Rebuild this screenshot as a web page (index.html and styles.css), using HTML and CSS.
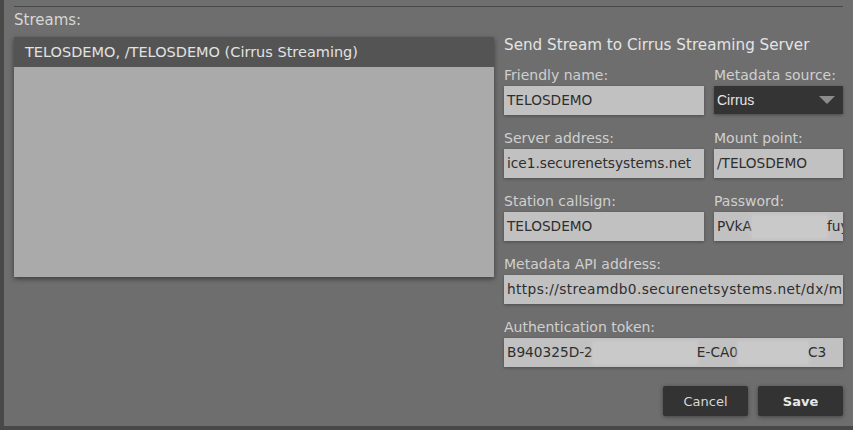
FILE: index.html
```html
<!DOCTYPE html>
<html>
<head>
<meta charset="utf-8">
<link rel="stylesheet" href="styles.css">
</head>
<body>
<div class="panel">
  <div class="rule"></div>
  <div class="section-label">Streams:</div>
  <div class="content">
    <div class="list">
      <div class="list-item selected">TELOSDEMO, /TELOSDEMO (Cirrus Streaming)</div>
    </div>
    <div class="form">
      <div class="title">Send Stream to Cirrus Streaming Server</div>
      <div class="grid">
        <div class="field-group">
          <div class="label">Friendly name:</div>
          <div class="input">TELOSDEMO</div>
        </div>
        <div class="field-group">
          <div class="label">Metadata source:</div>
          <div class="select"><span>Cirrus</span><span class="arrow"></span></div>
        </div>
        <div class="field-group">
          <div class="label">Server address:</div>
          <div class="input">ice1.securenetsystems.net</div>
        </div>
        <div class="field-group">
          <div class="label">Mount point:</div>
          <div class="input">/TELOSDEMO</div>
        </div>
        <div class="field-group">
          <div class="label">Station callsign:</div>
          <div class="input">TELOSDEMO</div>
        </div>
        <div class="field-group">
          <div class="label">Password:</div>
          <div class="input">PVkA<span class="redact pw"></span>fuy</div>
        </div>
        <div class="field-group wide">
          <div class="label">Metadata API address:</div>
          <div class="input url">https://streamdb0.securenetsystems.net/dx/metadata</div>
        </div>
        <div class="field-group wide">
          <div class="label">Authentication token:</div>
          <div class="input">B940325D-2<span class="redact t1"></span>E-CA0<span class="redact t2"></span>C3</div>
        </div>
      </div>
      <div class="buttons">
        <button class="btn">Cancel</button>
        <button class="btn primary">Save</button>
      </div>
    </div>
  </div>
</div>
</body>
</html>
```
FILE: styles.css
```css
html, body {
  margin: 0;
  padding: 0;
  background: #484848;
  width: 853px;
  height: 430px;
  overflow: hidden;
  font-family: "DejaVu Sans", "Open Sans", sans-serif;
}
.panel {
  margin-left: 4px;
  height: 426px;
  background: #6e6e6e;
  padding: 6px 10px 0 10px;
  box-sizing: border-box;
}
.rule {
  height: 1px;
  background: #484848;
}
.section-label {
  margin-top: 3px;
  height: 20px;
  line-height: 20px;
  font-size: 15px;
  color: #d6d6d6;
}
.content {
  margin-top: 7px;
  display: flex;
  gap: 10px;
}
.list {
  width: 480px;
  height: 240px;
  background: #aaaaaa;
  box-shadow: 0 2px 5px rgba(0,0,0,0.45);
  flex: none;
}
.list-item {
  height: 30px;
  line-height: 30px;
  padding-left: 11px;
  font-size: 14.5px;
  color: #e2e2e2;
}
.list-item.selected {
  background: #545454;
}
.form {
  width: 339px;
  display: flex;
  flex-direction: column;
}
.title {
  margin-top: -2px;
  height: 20px;
  line-height: 20px;
  font-size: 15.2px;
  color: #e4e4e4;
  white-space: nowrap;
}
.grid {
  margin-top: 11px;
  display: grid;
  grid-template-columns: 200px 129px;
  column-gap: 10px;
  row-gap: 14px;
}
.wide {
  grid-column: 1 / span 2;
}
.label {
  height: 18px;
  line-height: 18px;
  font-size: 14px;
  color: #d0d0d0;
  margin-bottom: 2px;
  white-space: nowrap;
}
.input {
  height: 29px;
  line-height: 29px;
  background: #c1c1c1;
  color: #2e2e2e;
  font-size: 13.7px;
  padding-left: 3px;
  white-space: nowrap;
  overflow: hidden;
  box-shadow: 0 1px 3px rgba(0,0,0,0.3);
}
.input.url {
  letter-spacing: 0.4px;
}
.redact {
  display: inline-block;
  height: 22px;
  vertical-align: middle;
  background: #c9c9c9;
  box-shadow: 0 0 4px 1px #c9c9c9;
}
.redact.pw { width: 75px; }
.redact.t1 { width: 104px; }
.redact.t2 { width: 70px; }
.select {
  height: 28px;
  background: #343434;
  color: #e6e6e6;
  font-family: "Liberation Sans", Arial, sans-serif;
  font-size: 14px;
  display: flex;
  align-items: center;
  justify-content: space-between;
  padding: 0 8px 0 3px;
  box-shadow: 0 1px 3px rgba(0,0,0,0.35);
}
.arrow {
  width: 0;
  height: 0;
  border-left: 8px solid transparent;
  border-right: 8px solid transparent;
  border-top: 8px solid #8c8c8c;
}
.buttons {
  margin-top: 19px;
  display: flex;
  justify-content: flex-end;
  gap: 10px;
}
.btn {
  width: 85px;
  height: 30px;
  border: none;
  border-radius: 2px;
  background: #333333;
  color: #d8d8d8;
  font-family: "DejaVu Sans", "Open Sans", sans-serif;
  font-size: 13px;
  box-shadow: 0 1px 4px rgba(0,0,0,0.4);
  padding: 0;
}
.btn.primary {
  font-weight: bold;
  color: #e8e8e8;
}
```
